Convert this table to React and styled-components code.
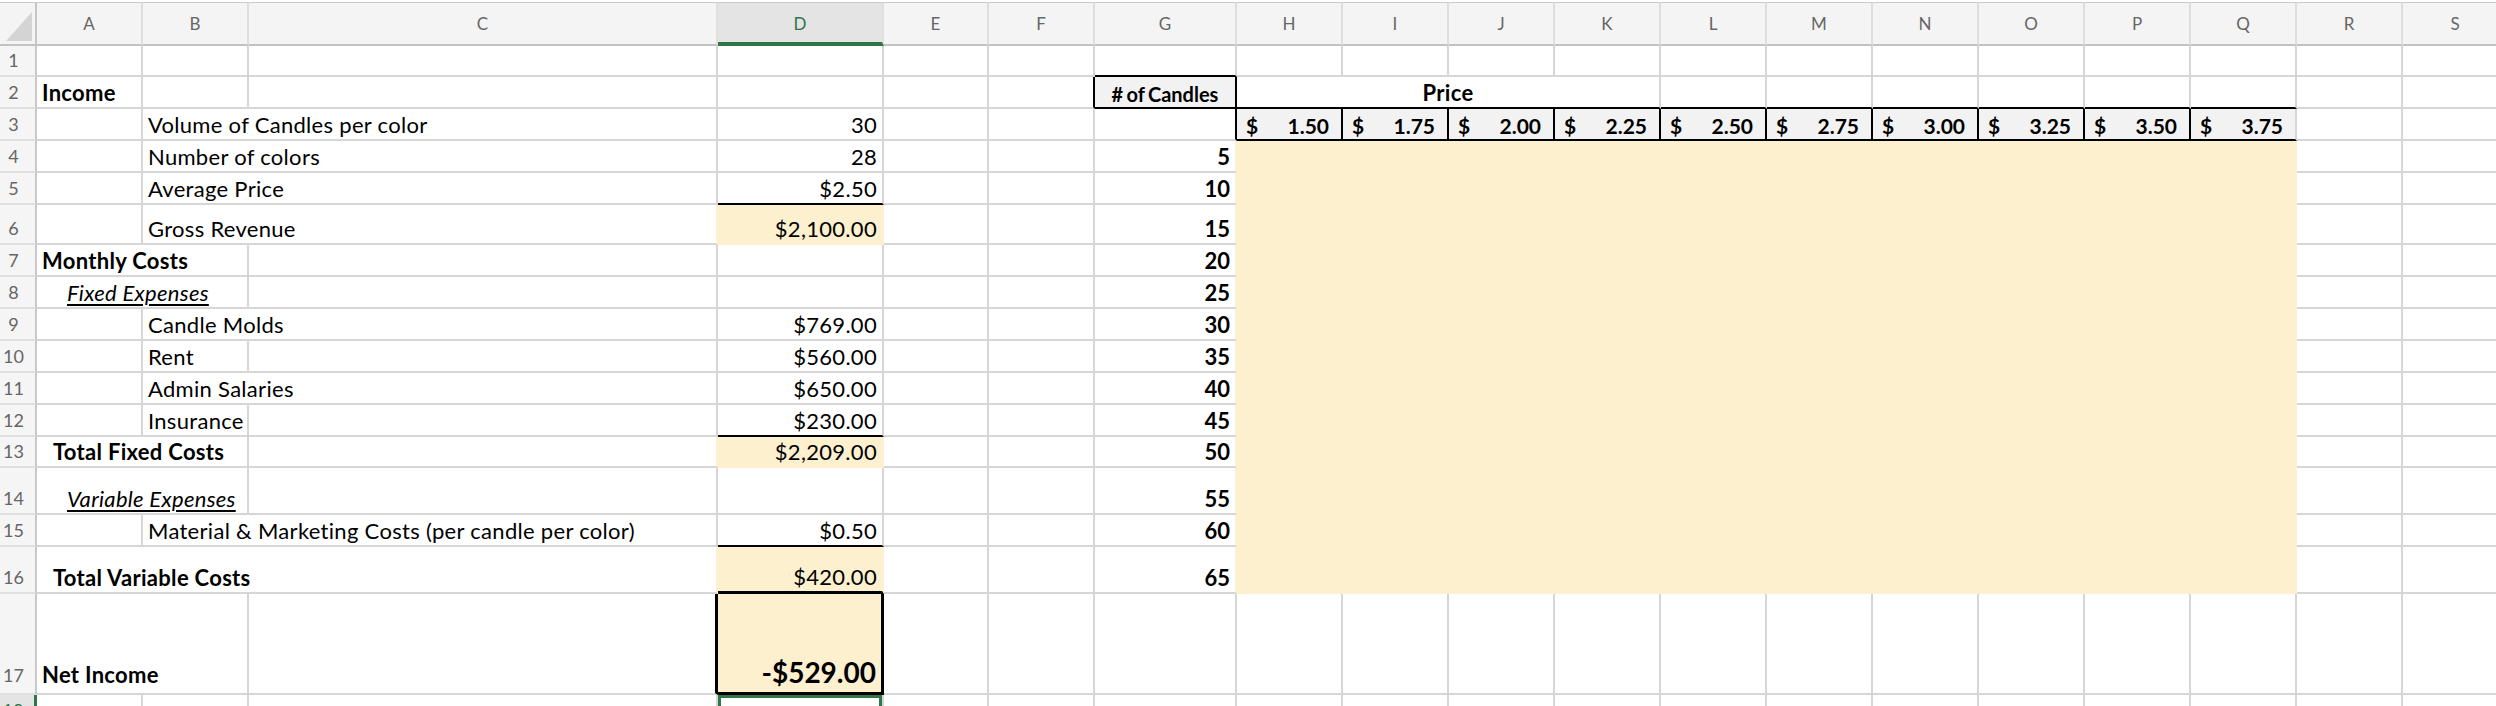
import React from 'react';
import styled, { createGlobalStyle } from 'styled-components';

const YELLOW = '#fcf0cf';
const GREY_FILL = '#f2f2f2';
const GRID = '#d6d6d6';
const GREEN = '#2f7547';
const BLACK2 = '2px solid #000';
const BLACK3 = '3px solid #000';

const COLS = ['A','B','C','D','E','F','G','H','I','J','K','L','M','N','O','P','Q','R','S'];
const COL_W = { A: 106, B: 106, C: 469, D: 166, E: 105, F: 106, G: 142 };
const ROW_H = [31, 32, 32, 32, 32, 40, 32, 32, 32, 32, 32, 32, 31, 47, 32, 47, 101, 32];

const GlobalStyle = createGlobalStyle`
  html, body {
    margin: 0;
    padding: 0;
    background: #fff;
    overflow: hidden;
  }
  body {
    width: 2496px;
    height: 706px;
    font-family: Lato, "Liberation Sans", sans-serif;
  }
`;

const Sheet = styled.div`
  display: grid;
  grid-template-columns: 37px ${COLS.map((c) => `${COL_W[c] || 106}px`).join(' ')};
  grid-template-rows: 44px ${ROW_H.map((h) => `${h}px`).join(' ')};
  padding-top: 2px;
  width: max-content;
  height: 704px;
  overflow: hidden;
  font-family: Lato, "Liberation Sans", sans-serif;
  color: #000;
`;

const Corner = styled.div`
  grid-column: 1;
  grid-row: 1;
  box-sizing: border-box;
  background: #f4f4f4;
  border-top: 1px solid #cacaca;
  border-right: 2px solid #c6c6c6;
  border-bottom: 2px solid #c2c2c2;
  display: flex;
  align-items: flex-end;
  justify-content: flex-end;
  padding: 0 3px 3px 0;
`;

const ColHeader = styled.div`
  grid-row: 1;
  grid-column: ${(p) => p.$col};
  box-sizing: border-box;
  display: flex;
  align-items: center;
  justify-content: center;
  font-size: 17px;
  color: ${(p) => (p.$selected ? GREEN : '#666')};
  background: ${(p) => (p.$selected ? '#e4e4e4' : '#f4f4f4')};
  border-top: 1px solid #cacaca;
  border-right: 2px solid #dedede;
  border-bottom: ${(p) => (p.$selected ? `4px solid ${GREEN}` : '2px solid #c2c2c2')};
  padding-top: ${(p) => (p.$selected ? '2px' : '0')};
`;

const RowHeader = styled.div`
  grid-column: 1;
  grid-row: ${(p) => p.$row};
  box-sizing: border-box;
  display: flex;
  align-items: flex-end;
  justify-content: center;
  padding: 0 8px ${(p) => p.$pb}px 0;
  font-size: 18px;
  line-height: 1.2;
  color: ${(p) => (p.$selected ? GREEN : '#666')};
  background: ${(p) => (p.$selected ? '#e4e4e4' : '#f5f5f5')};
  border-right: ${(p) => (p.$selected ? `3px solid ${GREEN}` : '2px solid #c8c8c8')};
  border-bottom: 2px solid #e0e0e0;
`;

const Cell = styled.div`
  grid-column: ${(p) => `${p.$col} / span ${p.$span}`};
  grid-row: ${(p) => `${p.$row} / span ${p.$rspan}`};
  box-sizing: border-box;
  min-width: 0;
  display: flex;
  align-items: flex-end;
  justify-content: ${(p) =>
    p.$align === 'right' ? 'flex-end' : p.$align === 'center' ? 'center' : 'flex-start'};
  padding: 0 5px ${(p) => p.$pb}px ${(p) => p.$indent}px;
  white-space: nowrap;
  font-size: ${(p) => p.$size}px;
  line-height: 1.2;
  letter-spacing: ${(p) => p.$ls}px;
  word-spacing: ${(p) => p.$ws}px;
  font-weight: ${(p) => (p.$bold ? 700 : 400)};
  font-style: ${(p) => (p.$italic ? 'italic' : 'normal')};
  text-decoration: ${(p) => (p.$underline ? 'underline' : 'none')};
  text-underline-offset: 3px;
  text-decoration-thickness: 1.5px;
  background: ${(p) => p.$fill || '#fff'};
  border-right: ${(p) => p.$br};
  border-bottom: ${(p) => p.$bb};
  box-shadow: ${(p) => (p.$selected ? `inset 0 0 0 3px ${GREEN}` : 'none')};
`;

const Accounting = styled.span`
  display: flex;
  width: 100%;
  justify-content: space-between;
  padding: 0 7px 0 4px;
  box-sizing: border-box;
`;

const Y = YELLOW;
const cells = {
  A2: { t: 'Income', b: 1 },
  G2: { t: '# of Candles', b: 1, al: 'center', fill: GREY_FILL, br: BLACK2, bb: BLACK2, ls: 0, ws: -1.5, size: 20 },
  H2: { t: 'Price', b: 1, al: 'center', span: 4, bb: BLACK2 },
  F2: { br: BLACK2 },
  G1: { bb: BLACK2 },
  B3: { t: 'Volume of Candles per color', span: 2 },
  D3: { t: '30', al: 'right' },
  G3: { br: BLACK2 },
  B4: { t: 'Number of colors', span: 2 },
  D4: { t: '28', al: 'right' },
  B5: { t: 'Average Price', span: 2 },
  D5: { t: '$2.50', al: 'right', bb: BLACK2 },
  B6: { t: 'Gross Revenue', span: 2 },
  D6: { t: '$2,100.00', al: 'right', fill: Y },
  A7: { t: 'Monthly Costs', b: 1, span: 2 },
  A8: { t: 'Fixed Expenses', i: 1, u: 1, span: 2, indent: 30 },
  B9: { t: 'Candle Molds', span: 2 },
  D9: { t: '$769.00', al: 'right' },
  B10: { t: 'Rent' },
  D10: { t: '$560.00', al: 'right' },
  B11: { t: 'Admin Salaries', span: 2 },
  D11: { t: '$650.00', al: 'right' },
  B12: { t: 'Insurance' },
  D12: { t: '$230.00', al: 'right', bb: BLACK2 },
  A13: { t: 'Total Fixed Costs', b: 1, span: 2, indent: 16 },
  D13: { t: '$2,209.00', al: 'right', fill: Y },
  A14: { t: 'Variable Expenses', i: 1, u: 1, span: 2, indent: 30 },
  B15: { t: 'Material & Marketing Costs (per candle per color)', span: 2 },
  D15: { t: '$0.50', al: 'right', bb: BLACK2 },
  A16: { t: 'Total Variable Costs', b: 1, span: 3, indent: 16 },
  D16: { t: '$420.00', al: 'right', fill: Y, bb: BLACK3 },
  A17: { t: 'Net Income', b: 1, span: 2, pb: 5 },
  C17: { br: BLACK3 },
  D17: { t: '-$529.00', al: 'right', b: 1, size: 28, fill: Y, br: BLACK3, bb: BLACK3, pb: 2, ls: 0 },
  D18: { selected: 1 },
  H4: { fill: Y, span: 10, rspan: 13 },
};

['L', 'M', 'N', 'O', 'P', 'Q'].forEach((c) => {
  cells[`${c}2`] = { bb: BLACK2 };
});
const prices = ['1.50', '1.75', '2.00', '2.25', '2.50', '2.75', '3.00', '3.25', '3.50', '3.75'];
['H', 'I', 'J', 'K', 'L', 'M', 'N', 'O', 'P', 'Q'].forEach((c, i) => {
  cells[`${c}3`] = {
    price: prices[i], b: 1, fill: GREY_FILL, size: 21, ls: 0,
    br: c === 'Q' ? undefined : BLACK2, bb: BLACK2,
  };
});
for (let r = 4; r <= 16; r += 1) {
  cells[`G${r}`] = { t: String((r - 3) * 5), al: 'right', b: 1, ls: 0 };
}

const owner = {};
Object.entries(cells).forEach(([key, def]) => {
  const col = COLS.indexOf(key[0]);
  const row = parseInt(key.slice(1), 10);
  const span = def.span || 1;
  const rspan = def.rspan || 1;
  for (let rr = row; rr < row + rspan; rr += 1) {
    for (let cc = col; cc < col + span; cc += 1) {
      owner[`${COLS[cc]}${rr}`] = key;
    }
  }
});

const ownerDef = (c, r) => {
  const k = owner[`${COLS[c]}${r}`];
  return k ? cells[k] : null;
};

const gridLine = `2px solid ${GRID}`;

function rightBorder(def, c, r, span) {
  if (def.br) return def.br;
  if (def.fill === Y) return `2px solid ${Y}`;
  const nb = ownerDef(c + span, r);
  if (nb && nb.fill === Y) return `2px solid ${Y}`;
  return gridLine;
}

function bottomBorder(def, c, r, rspan) {
  if (def.bb) return def.bb;
  if (def.fill === Y) return `2px solid ${Y}`;
  const nb = ownerDef(c, r + rspan);
  if (nb && nb.fill === Y && !nb.price) return `2px solid ${Y}`;
  return gridLine;
}

function buildCells() {
  const out = [];
  for (let r = 1; r <= ROW_H.length; r += 1) {
    for (let c = 0; c < COLS.length; c += 1) {
      const key = `${COLS[c]}${r}`;
      const own = owner[key];
      if (own && own !== key) continue;
      const def = cells[key] || {};
      const span = def.span || 1;
      const rspan = def.rspan || 1;
      out.push(
        <Cell
          key={key}
          $col={c + 2}
          $row={r + 1}
          $span={span}
          $rspan={rspan}
          $align={def.al}
          $bold={!!def.b}
          $italic={!!def.i}
          $underline={!!def.u}
          $size={def.size || 22}
          $ls={def.ls == null ? 0.3 : def.ls}
          $ws={def.ws || 0}
          $indent={def.indent || 5}
          $pb={def.pb == null ? 1 : def.pb}
          $fill={def.fill}
          $br={rightBorder(def, c, r, span)}
          $bb={bottomBorder(def, c, r, rspan)}
          $selected={!!def.selected}
        >
          {def.price ? (
            <Accounting>
              <span>$</span>
              <span>{def.price}</span>
            </Accounting>
          ) : (
            def.t
          )}
        </Cell>
      );
    }
  }
  return out;
}

export default function App() {
  return (
    <>
      <GlobalStyle />
      <Sheet>
        <Corner>
          <svg width="26" height="29" viewBox="0 0 26 29">
            <polygon points="0,29 26,0 26,29" fill="#d4d4d4" />
          </svg>
        </Corner>
        {COLS.map((c, i) => (
          <ColHeader key={c} $col={i + 2} $selected={c === 'D'}>
            {c}
          </ColHeader>
        ))}
        {ROW_H.map((h, i) => (
          <RowHeader key={i} $row={i + 2} $selected={i + 1 === 18} $pb={i + 1 === 17 ? 6 : 3}>
            {i + 1}
          </RowHeader>
        ))}
        {buildCells()}
      </Sheet>
    </>
  );
}
